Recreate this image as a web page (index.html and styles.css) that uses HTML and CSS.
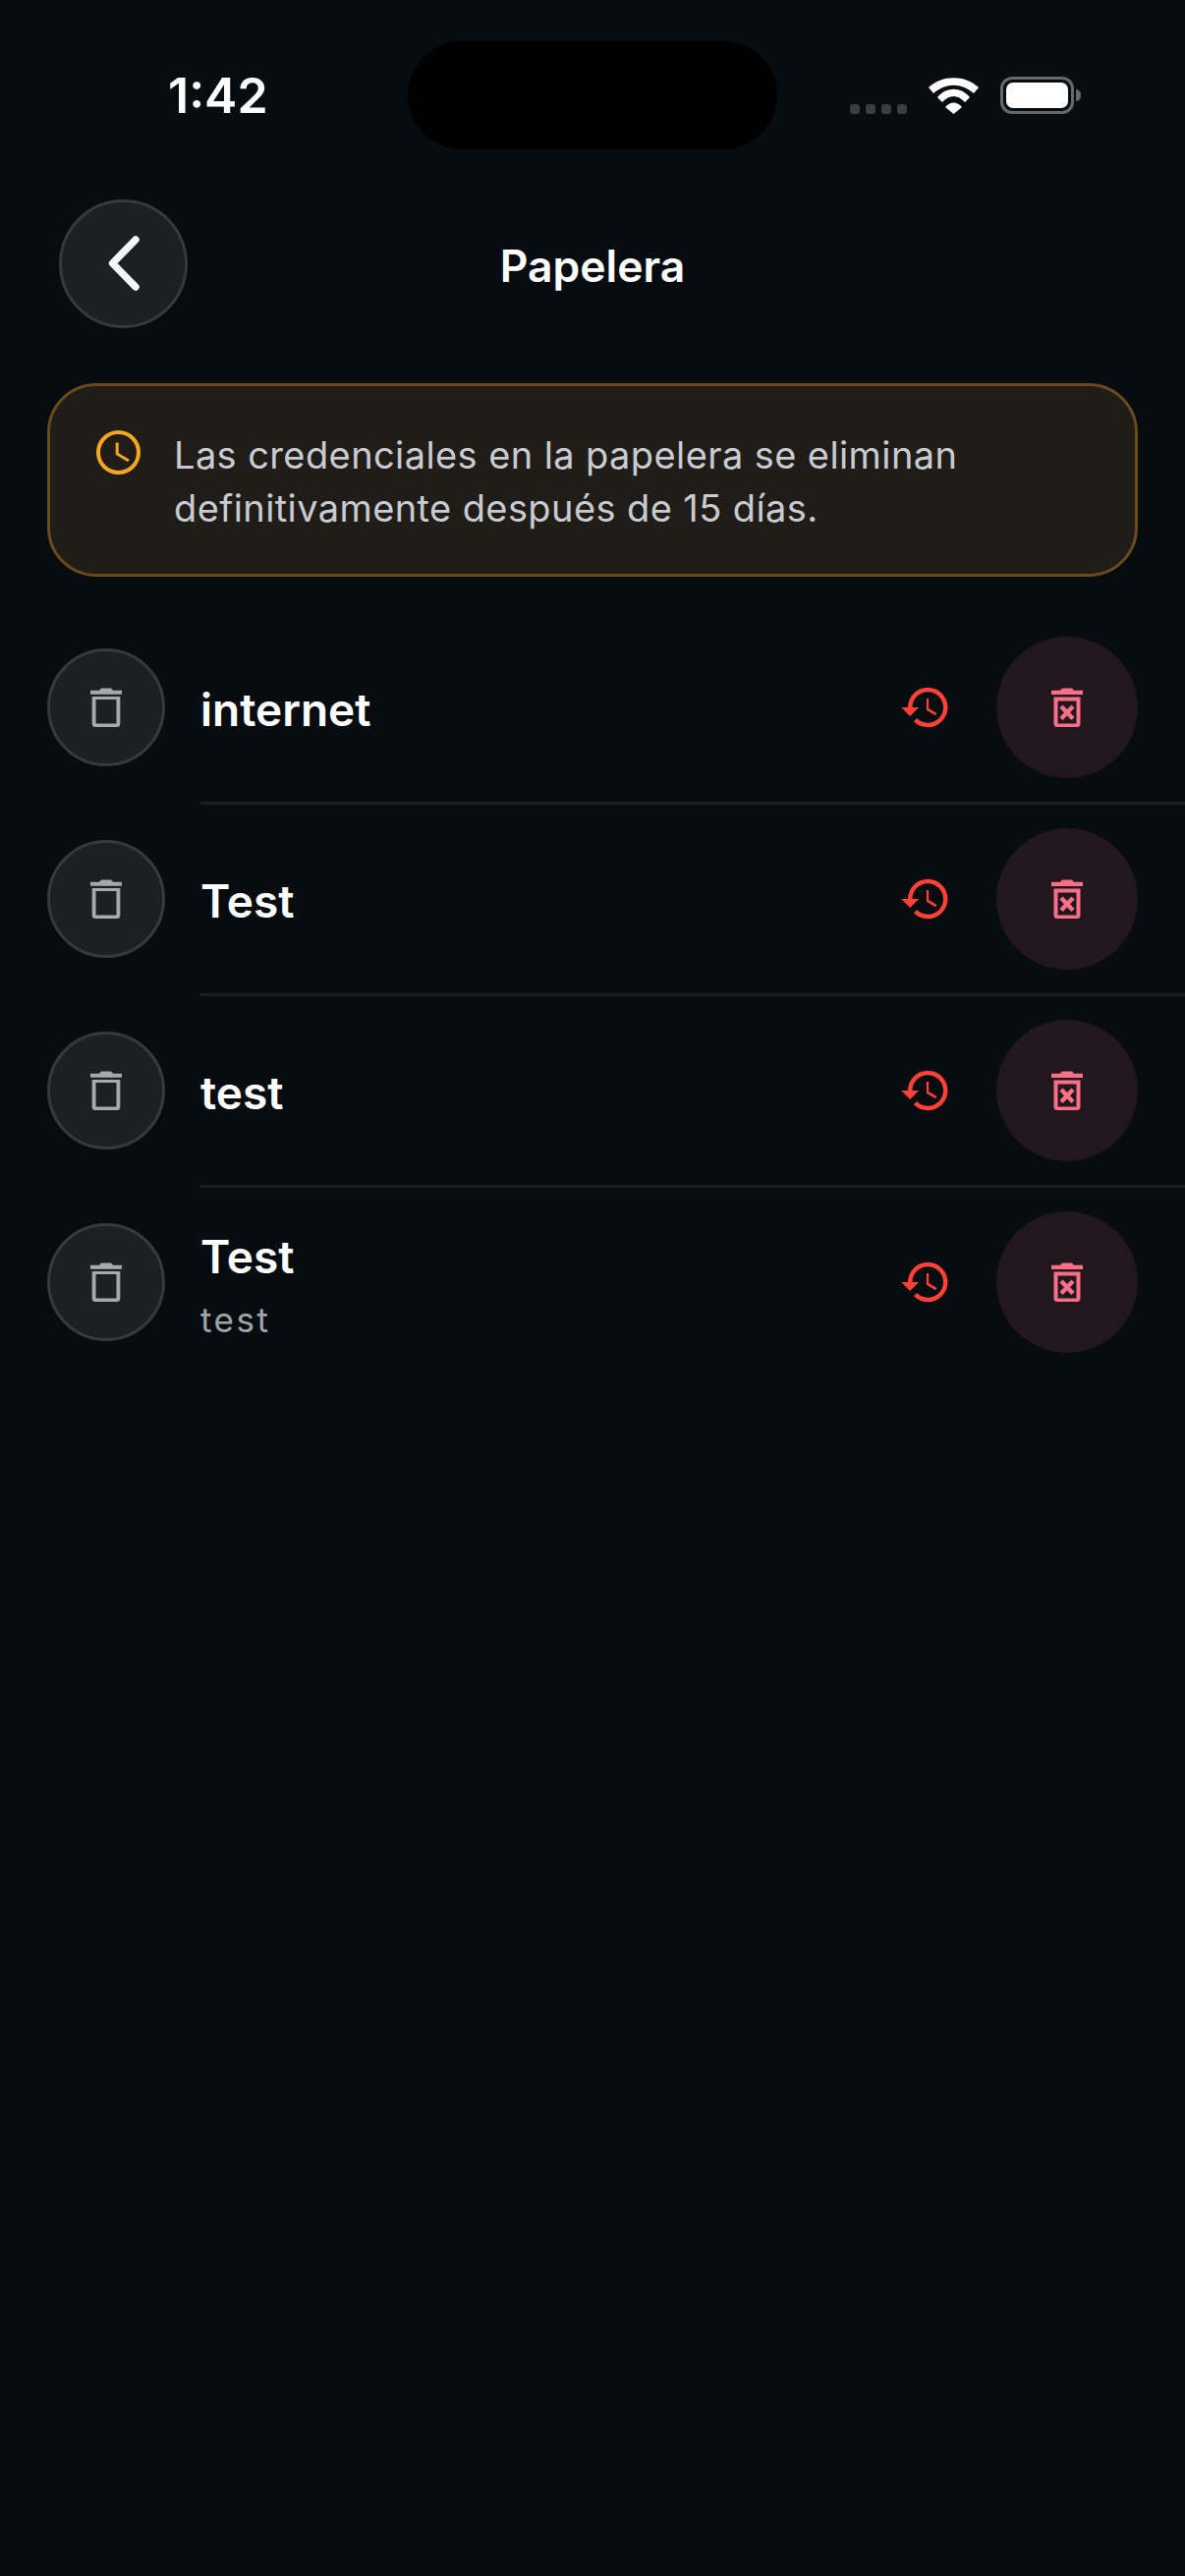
FILE: index.html
```html
<!DOCTYPE html>
<html lang="es">
<head>
    <meta charset="UTF-8">
    <meta name="viewport" content="width=device-width, initial-scale=1.0">
    <title>Papelera</title>
    <link rel="stylesheet" href="styles.css">
</head>
<body>

    <svg class="sprites" width="0" height="0">
        <symbol id="trash" viewBox="0 0 32 40">
            <path d="M0 2.700 H9 L11 0.500 H21 L23 2.700 H32 V6.700 H0 Z" fill="currentColor"/>
            <path d="M1.700 9 H30.300 V36.500 A3.500 3.500 0 0 1 26.800 40 H5.200 A3.500 3.500 0 0 1 1.700 36.500 Z M5.500 12 V36.500 H26.500 V12 Z" fill="currentColor" fill-rule="evenodd"/>
        </symbol>
        <symbol id="trash-x" viewBox="0 0 32 40">
            <path d="M0 2.700 H9 L11 0.500 H21 L23 2.700 H32 V7 H0 Z" fill="currentColor"/>
            <path d="M2.500 9.500 H29.500 V36.500 A3.500 3.500 0 0 1 26 40 H6 A3.500 3.500 0 0 1 2.500 36.500 Z M6.500 13.500 V36.500 H25.500 V13.500 Z" fill="currentColor" fill-rule="evenodd"/>
            <path d="M10 19 L22 31.500 M22 19 L10 31.500" stroke="currentColor" stroke-width="4.500" fill="none"/>
        </symbol>
        <symbol id="restore" viewBox="0 0 24 24">
            <path d="M13 3a9 9 0 0 0-9 9H1l3.890 3.890.07.14L9 12H6c0-3.870 3.130-7 7-7s7 3.130 7 7-3.130 7-7 7c-1.930 0-3.680-.79-4.940-2.060l-1.420 1.420A8.954 8.954 0 0 0 13 21a9 9 0 0 0 0-18zm-.6 5v5.200l4.100 2.440.6-.96-3.700-2.200V8h-1z" fill="currentColor"/>
        </symbol>
    </svg>

    <div class="phone">
        <!-- status bar -->
        <div class="status-bar">
            <span class="time">1:42</span>
            <div class="island"></div>
            <div class="status-icons">
                <div class="signal"><i></i><i></i><i></i><i></i></div>
                <svg class="wifi" viewBox="0 0 51 37">
                    <path d="M0 10 C14 -3 37 -3 51 10 L46 16 C33 5 18 5 5 16 Z" fill="#fff"/>
                    <path d="M9 20 C18 9 33 9 42 20 L37 25 C30 17 21 17 14 25 Z" fill="#fff"/>
                    <path d="M17 30 C22 24 29 24 34 30 L25.500 37 Z" fill="#fff"/>
                </svg>
                <div class="battery"><div class="battery-fill"></div></div>
                <div class="battery-nub"></div>
            </div>
        </div>

        <!-- header -->
        <div class="header">
            <button class="back-btn">
                <svg width="40" height="62" viewBox="0 0 40 62">
                    <path d="M33 7 L9.500 31 L33 55" fill="none" stroke="#f5f6f7" stroke-width="7.500" stroke-linecap="round" stroke-linejoin="round"/>
                </svg>
            </button>
            <h1 class="title">Papelera</h1>
        </div>

        <!-- notice -->
        <div class="notice">
            <svg class="notice-icon" viewBox="0 0 45 45">
                <circle cx="22.500" cy="22.500" r="20.500" fill="none" stroke="#f5a623" stroke-width="4"/>
                <path d="M21.200 12.500 V24 L33 31" fill="none" stroke="#f5a623" stroke-width="3"/>
            </svg>
            <p class="notice-text">Las credenciales en la papelera se eliminan definitivamente después de 15 días.</p>
        </div>

        <!-- trashed items -->
        <div class="list">
            <div class="row">
                <div class="row-icon"><svg class="trash-icon"><use href="#trash"/></svg></div>
                <div class="row-body">
                    <div class="row-text"><div class="name">internet</div></div>
                    <svg class="restore-icon"><use href="#restore"/></svg>
                    <div class="delete-btn"><svg class="trash-icon"><use href="#trash-x"/></svg></div>
                </div>
            </div>
            <div class="row">
                <div class="row-icon"><svg class="trash-icon"><use href="#trash"/></svg></div>
                <div class="row-body">
                    <div class="row-text"><div class="name">Test</div></div>
                    <svg class="restore-icon"><use href="#restore"/></svg>
                    <div class="delete-btn"><svg class="trash-icon"><use href="#trash-x"/></svg></div>
                </div>
            </div>
            <div class="row">
                <div class="row-icon"><svg class="trash-icon"><use href="#trash"/></svg></div>
                <div class="row-body">
                    <div class="row-text"><div class="name">test</div></div>
                    <svg class="restore-icon"><use href="#restore"/></svg>
                    <div class="delete-btn"><svg class="trash-icon"><use href="#trash-x"/></svg></div>
                </div>
            </div>
            <div class="row">
                <div class="row-icon"><svg class="trash-icon"><use href="#trash"/></svg></div>
                <div class="row-body">
                    <div class="row-text">
                        <div class="name">Test</div>
                        <div class="sub">test</div>
                    </div>
                    <svg class="restore-icon"><use href="#restore"/></svg>
                    <div class="delete-btn"><svg class="trash-icon"><use href="#trash-x"/></svg></div>
                </div>
            </div>
        </div>
    </div>

</body>
</html>
```

FILE: styles.css
```css
/* General Styling */
html, body {
    margin: 0;
    padding: 0;
    background-color: #070c11;
}

body {
    font-family: Inter, "Noto Sans", sans-serif;
    color: #fff;
}

.sprites {
    position: absolute;
}

.phone {
    position: relative;
    width: 1206px;
    height: 2622px;
    overflow: hidden;
}

/* Status bar */
.status-bar {
    display: flex;
    justify-content: space-between;
    align-items: flex-start;
    height: 202px;
    padding: 0 106px 0 171px;
    box-sizing: border-box;
}

.time {
    margin-top: 67px;
    font-size: 50px;
    line-height: 60px;
    font-weight: 600;
}

.island {
    position: absolute;
    left: 415px;
    top: 42px;
    width: 376px;
    height: 110px;
    border-radius: 55px;
    background: #000;
}

.status-icons {
    display: flex;
    align-items: flex-start;
    margin-top: 78px;
}

.signal {
    display: flex;
    gap: 6px;
    margin: 28px 22px 0 0;
}

.signal i {
    width: 10px;
    height: 10px;
    border-radius: 3px;
    background: #3a3d42;
}

.wifi {
    width: 51px;
    height: 37px;
    margin: 1px 22px 0 0;
}

.battery {
    width: 75px;
    height: 38px;
    padding: 3px;
    box-sizing: border-box;
    border: 3px solid #65686c;
    border-radius: 12px;
}

.battery-fill {
    height: 100%;
    border-radius: 7px;
    background: #fff;
}

.battery-nub {
    width: 5px;
    height: 12px;
    margin: 13px 0 0 2px;
    border-radius: 0 6px 6px 0;
    background: #65686c;
}

/* Header */
.header {
    display: grid;
    grid-template-columns: 131px 1fr 131px;
    align-items: center;
    height: 132px;
    padding: 0 60px;
}

.back-btn {
    display: flex;
    align-items: center;
    justify-content: center;
    width: 131px;
    height: 131px;
    padding: 0 2px 0 0;
    border: 3px solid #36393d;
    border-radius: 50%;
    background: #1c2024;
}

.title {
    margin: 5px 0 0;
    font-size: 44.500px;
    line-height: 50px;
    font-weight: 600;
    text-align: center;
}

/* Notice */
.notice {
    display: flex;
    gap: 34px;
    box-sizing: border-box;
    height: 197px;
    margin: 56px 48px 0;
    padding: 45px 40px 0 47px;
    border: 3px solid #6b4b1c;
    border-radius: 50px;
    background: #201c17;
}

.notice-icon {
    flex: none;
    width: 45px;
    height: 45px;
}

.notice-text {
    margin: -2px 0 0;
    font-size: 38px;
    line-height: 54px;
    letter-spacing: 0.400px;
    color: #c8ccd2;
}

/* List */
.list {
    margin-top: 37px;
}

.row {
    display: flex;
    align-items: center;
    height: 195px;
    padding-left: 48px;
}

.row-icon {
    display: flex;
    flex: none;
    align-items: center;
    justify-content: center;
    box-sizing: border-box;
    width: 120px;
    height: 120px;
    margin: -3px 36px 0 0;
    border: 3px solid #36393d;
    border-radius: 50%;
    background: #1c2024;
    color: #a6aaad;
}

.trash-icon {
    width: 32px;
    height: 40px;
}

.row-body {
    display: flex;
    flex: 1;
    align-items: center;
    box-sizing: border-box;
    height: 195px;
    padding-right: 48px;
    border-bottom: 3px solid #1b1f24;
}

.row:last-child .row-body {
    border-bottom-color: transparent;
}

.row-text {
    flex: 1;
    padding-top: 3px;
}

.name {
    font-size: 46px;
    line-height: 58px;
    font-weight: 600;
}

.sub {
    margin-top: 14px;
    font-size: 35px;
    line-height: 42px;
    letter-spacing: 2.500px;
    color: #a0a4a8;
}

.restore-icon {
    flex: none;
    width: 54px;
    height: 54px;
    margin-right: 45px;
    color: #ff4136;
}

.delete-btn {
    display: flex;
    flex: none;
    align-items: center;
    justify-content: center;
    width: 144px;
    height: 144px;
    border-radius: 50%;
    background: #21171c;
    color: #f96f87;
}
```
